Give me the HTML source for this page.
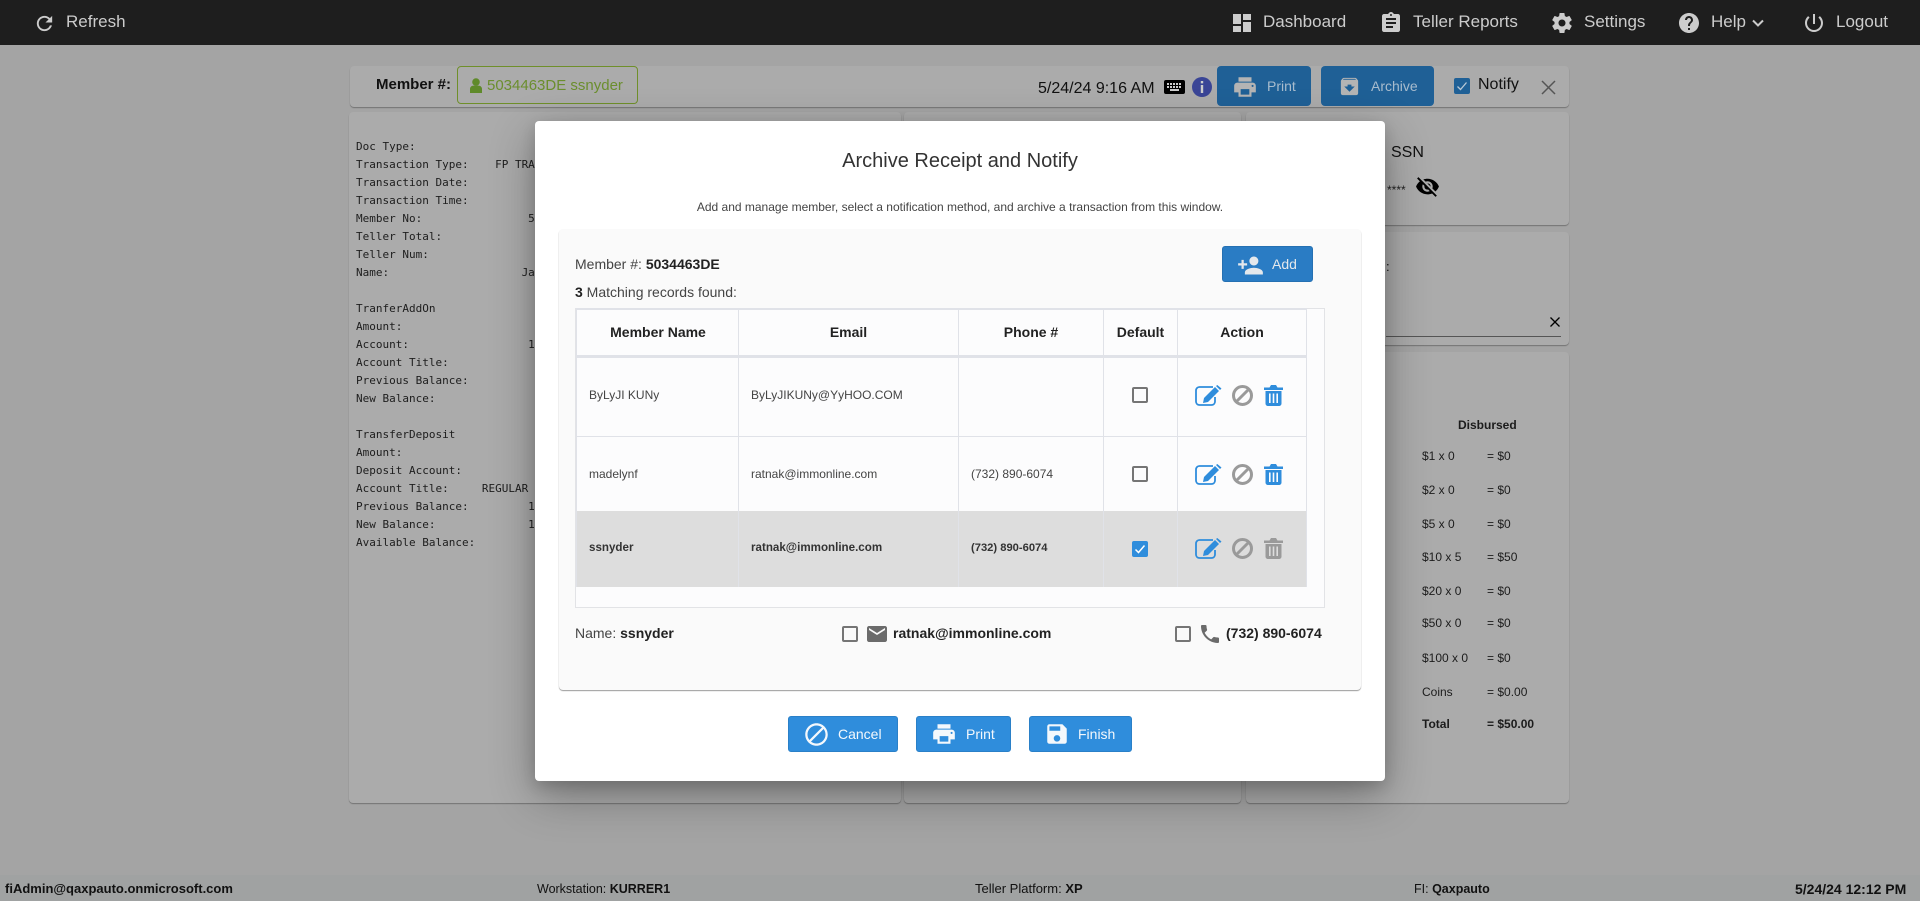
<!DOCTYPE html>
<html><head><meta charset="utf-8"><title>Archive Receipt and Notify</title>
<style>
*{box-sizing:border-box}
html,body{margin:0;padding:0;width:1920px;height:901px;overflow:hidden}
body{background:#a4a4a4;font-family:"Liberation Sans",Arial,sans-serif;position:relative;color:#222}
.a,.t,svg.i{position:absolute}
.t{white-space:nowrap;line-height:20px}
svg.i{display:block}
.panel{position:absolute;background:#ababab;border-radius:4px;box-shadow:0 1px 1px rgba(0,0,0,.3)}
pre{position:absolute;left:356px;top:138px;margin:0;font:11px/18px "DejaVu Sans Mono","Liberation Mono",monospace;color:#1d1d1d}
.b{font-weight:bold}
.btn{position:absolute;border-radius:3px;background:#2f8ddc;border:1px solid #2a80c8}
.w{color:#f4f8fc;font-size:14px}
.cb{position:absolute;width:16px;height:16px;border:2px solid #757575;border-radius:2px;background:transparent}
.line{position:absolute;background:#e0e2e8}
.c12{font-size:12px;color:#444}
.s12{font-size:12px;color:#1c1c1c}
.sb{font-size:13px;color:#111}
</style></head>
<body>
<!-- top bar -->
<div class="a" style="left:0;top:0;width:1920px;height:45px;background:#1e1e1e"></div>
<svg class="i" style="left:33px;top:12px" width="23" height="23" viewBox="0 0 24 24" fill="#ccc"><path d="M17.65 6.35C16.2 4.9 14.21 4 12 4c-4.42 0-7.99 3.58-7.99 8s3.57 8 7.99 8c3.73 0 6.84-2.55 7.73-6h-2.08c-.82 2.33-3.04 4-5.65 4-3.31 0-6-2.69-6-6s2.69-6 6-6c1.66 0 3.14.69 4.22 1.78L13 11h7V4l-2.35 2.35z"/></svg>
<div class="t" style="left:66px;top:12px;font-size:17px;color:#ccc">Refresh</div>
<svg class="i" style="left:1230px;top:11px" width="24" height="24" viewBox="0 0 24 24" fill="#ccc"><path d="M3 13h8V3H3v10zm0 8h8v-6H3v6zm10 0h8V11h-8v10zm0-18v6h8V3h-8z"/></svg>
<div class="t" style="left:1263px;top:12px;font-size:17px;color:#ccc">Dashboard</div>
<svg class="i" style="left:1379px;top:11px" width="24" height="24" viewBox="0 0 24 24" fill="#ccc"><path d="M19 3h-4.18C14.4 1.84 13.3 1 12 1c-1.3 0-2.4.84-2.82 2H5c-1.1 0-2 .9-2 2v14c0 1.1.9 2 2 2h14c1.1 0 2-.9 2-2V5c0-1.1-.9-2-2-2zm-7 0c.55 0 1 .45 1 1s-.45 1-1 1-1-.45-1-1 .45-1 1-1zm2 14H7v-2h7v2zm3-4H7v-2h10v2zm0-4H7V7h10v2z"/></svg>
<div class="t" style="left:1413px;top:12px;font-size:17px;color:#ccc">Teller Reports</div>
<svg class="i" style="left:1550px;top:11px" width="24" height="24" viewBox="0 0 24 24" fill="#ccc"><path d="M19.43 12.98c.04-.32.07-.64.07-.98s-.03-.66-.07-.98l2.11-1.65c.19-.15.24-.42.12-.64l-2-3.46c-.12-.22-.39-.3-.61-.22l-2.49 1c-.52-.4-1.08-.73-1.69-.98l-.38-2.65C14.46 2.18 14.25 2 14 2h-4c-.25 0-.46.18-.49.42l-.38 2.65c-.61.25-1.17.59-1.69.98l-2.49-1c-.23-.09-.49 0-.61.22l-2 3.46c-.13.22-.07.49.12.64l2.11 1.65c-.04.32-.07.65-.07.98s.03.66.07.98l-2.11 1.65c-.19.15-.24.42-.12.64l2 3.46c.12.22.39.3.61.22l2.49-1c.52.4 1.08.73 1.69.98l.38 2.65c.03.24.24.42.49.42h4c.25 0 .46-.18.49-.42l.38-2.65c.61-.25 1.17-.59 1.69-.98l2.49 1c.23.09.49 0 .61-.22l2-3.46c.12-.22.07-.49-.12-.64l-2.11-1.65zM12 15.5c-1.93 0-3.5-1.57-3.5-3.5s1.57-3.5 3.5-3.5 3.5 1.57 3.5 3.5-1.57 3.5-3.5 3.5z"/></svg>
<div class="t" style="left:1584px;top:12px;font-size:17px;color:#ccc">Settings</div>
<svg class="i" style="left:1677px;top:11px" width="24" height="24" viewBox="0 0 24 24" fill="#ccc"><path d="M12 2C6.48 2 2 6.48 2 12s4.48 10 10 10 10-4.48 10-10S17.52 2 12 2zm1 17h-2v-2h2v2zm2.07-7.75l-.9.92C13.45 12.9 13 13.5 13 15h-2v-.5c0-1.1.45-2.1 1.17-2.83l1.24-1.26c.37-.36.59-.86.59-1.41 0-1.1-.9-2-2-2s-2 .9-2 2H8c0-2.21 1.79-4 4-4s4 1.79 4 4c0 .88-.36 1.68-.93 2.25z"/></svg>
<div class="t" style="left:1711px;top:12px;font-size:17px;color:#ccc">Help</div>
<svg class="i" style="left:1751px;top:18px" width="14" height="10" viewBox="0 0 14 10" fill="none" stroke="#ccc" stroke-width="2"><path d="M2 2.5l5 5 5-5"/></svg>
<svg class="i" style="left:1802px;top:11px" width="24" height="24" viewBox="0 0 24 24" fill="#ccc"><path d="M13 3h-2v10h2V3zm4.83 2.17l-1.42 1.42C17.99 7.86 19 9.81 19 12c0 3.87-3.13 7-7 7s-7-3.13-7-7c0-2.19 1.01-4.14 2.58-5.42L6.17 5.17C4.23 6.82 3 9.26 3 12c0 4.97 4.03 9 9 9s9-4.03 9-9c0-2.74-1.23-5.18-3.17-6.83z"/></svg>
<div class="t" style="left:1836px;top:12px;font-size:17px;color:#ccc">Logout</div>

<!-- member bar -->
<div class="panel" style="left:350px;top:66px;width:1219px;height:41px"></div>
<div class="t b" style="left:376px;top:75px;font-size:15px;color:#111">Member #:</div>
<div class="a" style="left:457px;top:66px;width:181px;height:38px;border:1px solid #6f8f2a;border-radius:4px"></div>
<svg class="i" style="left:470px;top:78px" width="12" height="15" viewBox="0 0 12 15" fill="#5f8a2a"><circle cx="6" cy="4" r="3.8"/><path d="M0 15v-4c0-2 1.6-3.4 3.4-3.4h5.2C10.4 7.600 12 9 12 11v4z"/></svg>
<div class="t" style="left:487px;top:76px;font-size:15px;color:#6b8e2e">5034463DE ssnyder</div>
<div class="t" style="left:1038px;top:79px;font-size:16px;color:#111">5/24/24 9:16 AM</div>
<div class="a" style="left:1164px;top:80px;width:21px;height:14px;background:#000;border-radius:2px"></div>
<svg class="i" style="left:1166px;top:82px" width="17" height="10" viewBox="0 0 17 10" fill="#ccc"><path d="M1 1h2v2H1zM4 1h2v2H4zM7 1h2v2H7zM10 1h2v2h-2zM13 1h2v2h-2zM1 4h2v2H1zM4 4h2v2H4zM7 4h2v2H7zM10 4h2v2h-2zM13 4h2v2h-2zM4 7h9v2H4z"/></svg>
<svg class="i" style="left:1192px;top:77px" width="20" height="20" viewBox="0 0 20 20"><circle cx="10" cy="10" r="10" fill="#3a4596"/><path d="M8.800 4h2.400v2.400H8.800zM8.800 8h2.400v8H8.800z" fill="#ccc"/></svg>
<div class="a" style="left:1217px;top:66px;width:94px;height:40px;background:#1f6096;border-radius:4px"></div>
<svg class="i" style="left:1232px;top:74px" width="26" height="26" viewBox="0 0 24 24" fill="#b4b4b4"><path d="M19 8H5c-1.660 0-3 1.340-3 3v6h4v4h12v-4h4v-6c0-1.660-1.340-3-3-3zm-3 11H8v-5h8v5zm3-7c-.55 0-1-.45-1-1s.45-1 1-1 1 .45 1 1-.45 1-1 1zm-1-9H6v4h12V3z"/></svg>
<div class="t" style="left:1267px;top:76px;font-size:14px;color:#a8bccd">Print</div>
<div class="a" style="left:1321px;top:66px;width:113px;height:40px;background:#1f6096;border-radius:4px"></div>
<svg class="i" style="left:1338px;top:75px" width="23" height="23" viewBox="0 0 24 24" fill="#b4b4b4"><path d="M20.540 5.230l-1.390-1.680C18.880 3.210 18.470 3 18 3H6c-.47 0-.88.21-1.160.55L3.460 5.230C3.170 5.570 3 6.020 3 6.500V19c0 1.100.9 2 2 2h14c1.100 0 2-.9 2-2V6.500c0-.48-.17-.93-.46-1.270zM12 17.500L6.500 12H10v-2h4v2h3.500L12 17.500zM5.120 5l.81-1h12l.94 1H5.120z"/></svg>
<div class="t" style="left:1371px;top:76px;font-size:14px;color:#a8bccd">Archive</div>
<div class="a" style="left:1454px;top:78px;width:16px;height:16px;background:#1f6096;border-radius:2px"></div>
<svg class="i" style="left:1454px;top:78px" width="16" height="16" viewBox="0 0 16 16" fill="none" stroke="#b8c8d6" stroke-width="1.300"><path d="M3.500 8.500l3 3 6-7"/></svg>
<div class="t" style="left:1478px;top:75px;font-size:16px;color:#111">Notify</div>
<svg class="i" style="left:1541px;top:80px" width="15" height="15" viewBox="0 0 15 15" fill="none" stroke="#555" stroke-width="1.500"><path d="M1 1l13 13M14 1L1 14"/></svg>

<!-- background panels -->
<div class="panel" style="left:349px;top:112px;width:552px;height:691px"></div>
<div class="panel" style="left:904px;top:112px;width:337px;height:691px"></div>
<div class="panel" style="left:1246px;top:112px;width:323px;height:113px"></div>
<div class="panel" style="left:1246px;top:232px;width:323px;height:113px"></div>
<div class="panel" style="left:1246px;top:352px;width:323px;height:451px"></div>
<pre>Doc Type:
Transaction Type:    FP TRANSFER
Transaction Date:
Transaction Time:
Member No:                5034463DE
Teller Total:
Teller Num:
Name:                    Jane

TranferAddOn
Amount:
Account:                  1234
Account Title:
Previous Balance:
New Balance:

TransferDeposit
Amount:
Deposit Account:
Account Title:     REGULAR SAVINGS
Previous Balance:         1000
New Balance:              1000
Available Balance:</pre>
<div class="t" style="left:1391px;top:143px;font-size:16px;color:#111">SSN</div>
<div class="t" style="left:1387px;top:180px;font-size:12px;color:#222">****</div>
<svg class="i" style="left:1415px;top:174px" width="25" height="25" viewBox="0 0 24 24" fill="#000"><path d="M12 7c2.760 0 5 2.240 5 5 0 .65-.13 1.260-.36 1.830l2.920 2.920c1.510-1.260 2.700-2.890 3.430-4.750-1.730-4.390-6-7.500-11-7.500-1.400 0-2.740.25-3.980.7l2.160 2.160C10.740 7.130 11.350 7 12 7zM2 4.270l2.280 2.280.46.46C3.080 8.300 1.780 10.020 1 12c1.730 4.390 6 7.500 11 7.500 1.550 0 3.030-.3 4.380-.84l.42.42L19.730 22 21 20.730 3.270 3 2 4.270zM7.530 9.800l1.550 1.550c-.05.21-.08.43-.08.65 0 1.660 1.340 3 3 3 .22 0 .44-.03.65-.08l1.550 1.550c-.67.33-1.410.53-2.200.53-2.760 0-5-2.240-5-5 0-.79.2-1.530.53-2.200zm4.310-.78l3.150 3.150.02-.16c0-1.660-1.340-3-3-3l-.17.01z"/></svg>
<div class="t" style="left:1386px;top:257px;font-size:13px;color:#111">:</div>
<svg class="i" style="left:1550px;top:317px" width="10" height="10" viewBox="0 0 10 10" fill="none" stroke="#000" stroke-width="1.300"><path d="M.5.5l9 9M9.500.5l-9 9"/></svg>
<div class="a" style="left:1386px;top:336px;width:175px;height:1px;background:#555"></div>
<div class="t b s12" style="left:1458px;top:415px">Disbursed</div>
<div class="t s12" style="left:1422px;top:446px">$1 x 0</div><div class="t s12" style="left:1487px;top:446px">= $0</div>
<div class="t s12" style="left:1422px;top:480px">$2 x 0</div><div class="t s12" style="left:1487px;top:480px">= $0</div>
<div class="t s12" style="left:1422px;top:514px">$5 x 0</div><div class="t s12" style="left:1487px;top:514px">= $0</div>
<div class="t s12" style="left:1422px;top:547px">$10 x 5</div><div class="t s12" style="left:1487px;top:547px">= $50</div>
<div class="t s12" style="left:1422px;top:581px">$20 x 0</div><div class="t s12" style="left:1487px;top:581px">= $0</div>
<div class="t s12" style="left:1422px;top:613px">$50 x 0</div><div class="t s12" style="left:1487px;top:613px">= $0</div>
<div class="t s12" style="left:1422px;top:648px">$100 x 0</div><div class="t s12" style="left:1487px;top:648px">= $0</div>
<div class="t s12" style="left:1422px;top:682px">Coins</div><div class="t s12" style="left:1487px;top:682px">= $0.00</div>
<div class="t s12 b" style="left:1422px;top:714px">Total</div><div class="t s12 b" style="left:1487px;top:714px">= $50.00</div>

<!-- status bar -->
<div class="a" style="left:0;top:875px;width:1920px;height:26px;background:#a0a2a2"></div>
<div class="t sb b" style="left:5px;top:879px">fiAdmin@qaxpauto.onmicrosoft.com</div>
<div class="t sb" style="left:537px;top:879px;font-size:12.500px">Workstation: <b>KURRER1</b></div>
<div class="t sb" style="left:975px;top:879px">Teller Platform: <b>XP</b></div>
<div class="t sb" style="left:1414px;top:879px;font-size:12.500px">FI: <b>Qaxpauto</b></div>
<div class="t sb b" style="left:1795px;top:879px;font-size:14px">5/24/24 12:12 PM</div>

<!-- modal -->
<div class="a" style="left:535px;top:121px;width:850px;height:660px;background:#fff;border-radius:4px;box-shadow:0 15px 45px rgba(0,0,0,.32),0 5px 15px rgba(0,0,0,.15)"></div>
<div class="t" style="left:535px;width:850px;text-align:center;top:151px;font-size:20px;color:#333">Archive Receipt and Notify</div>
<div class="t" style="left:535px;width:850px;text-align:center;top:197px;font-size:12px;color:#444">Add and manage member, select a notification method, and archive a transaction from this window.</div>
<div class="a" style="left:559px;top:229px;width:802px;height:461px;background:#fafafa;border-radius:4px;box-shadow:0 1px 1px rgba(0,0,0,.4)"></div>
<div class="t" style="left:575px;top:254px;font-size:14px;color:#444">Member #: <b style="color:#222">5034463DE</b></div>
<div class="t" style="left:575px;top:282px;font-size:14px;color:#444"><b style="color:#222">3</b> Matching records found:</div>
<div class="a" style="left:1222px;top:246px;width:91px;height:36px;background:#2a7cc4;border:1px solid #2570b2;border-radius:3px"></div>
<svg class="i" style="left:1237px;top:252px" width="27" height="27" viewBox="0 0 24 24" fill="#e4e8ec"><path d="M15 12c2.210 0 4-1.790 4-4s-1.790-4-4-4-4 1.790-4 4 1.790 4 4 4zm-9-2V7H4v3H1v2h3v3h2v-3h3v-2H6zm9 4c-2.670 0-8 1.340-8 4v2h16v-2c0-2.660-5.330-4-8-4z"/></svg>
<div class="t" style="left:1272px;top:254px;font-size:14px;color:#e4e8ec">Add</div>

<!-- table -->
<div class="a" style="left:575px;top:308px;width:750px;height:300px;border:1px solid #e2e3e6;background:#fcfcfd"></div>
<div class="a" style="left:576px;top:511px;width:731px;height:76px;background:#dddddd"></div>
<div class="line" style="left:576px;top:308px;width:731px;height:2px"></div>
<div class="line" style="left:576px;top:355px;width:731px;height:3px"></div>
<div class="line" style="left:576px;top:436px;width:731px;height:1px"></div>
<div class="line" style="left:576px;top:309px;width:1px;height:278px"></div>
<div class="line" style="left:738px;top:309px;width:1px;height:278px"></div>
<div class="line" style="left:958px;top:309px;width:1px;height:278px"></div>
<div class="line" style="left:1103px;top:309px;width:1px;height:278px"></div>
<div class="line" style="left:1177px;top:309px;width:1px;height:278px"></div>
<div class="line" style="left:1306px;top:309px;width:1px;height:278px"></div>
<div class="t b" style="left:578px;width:160px;text-align:center;top:322px;font-size:14px;color:#222">Member Name</div>
<div class="t b" style="left:739px;width:219px;text-align:center;top:322px;font-size:14px;color:#222">Email</div>
<div class="t b" style="left:959px;width:144px;text-align:center;top:322px;font-size:14px;color:#222">Phone #</div>
<div class="t b" style="left:1104px;width:73px;text-align:center;top:322px;font-size:14px;color:#222">Default</div>
<div class="t b" style="left:1178px;width:128px;text-align:center;top:322px;font-size:14px;color:#222">Action</div>
<div class="t c12" style="left:589px;top:385px">ByLyJI KUNy</div>
<div class="t c12" style="left:751px;top:385px">ByLyJIKUNy@YyHOO.COM</div>
<div class="t c12" style="left:589px;top:464px">madelynf</div>
<div class="t c12" style="left:751px;top:464px">ratnak@immonline.com</div>
<div class="t c12" style="left:971px;top:464px">(732) 890-6074</div>
<div class="t c12 b" style="left:589px;top:538px;font-size:11.600px;color:#333">ssnyder</div>
<div class="t c12 b" style="left:751px;top:538px;font-size:11.600px;color:#333">ratnak@immonline.com</div>
<div class="t c12 b" style="left:971px;top:538px;font-size:11.200px;color:#333">(732) 890-6074</div>
<div class="cb" style="left:1132px;top:387px"></div>
<div class="cb" style="left:1132px;top:466px"></div>
<div class="a" style="left:1132px;top:541px;width:16px;height:16px;background:#2f8ddc;border-radius:2px"></div>
<svg class="i" style="left:1132px;top:541px" width="16" height="16" viewBox="0 0 16 16" fill="none" stroke="#fff" stroke-width="1.500"><path d="M3.500 8.500l3 3 6-7"/></svg>

<!-- row 1 action icons -->
<svg class="i" style="left:1195px;top:385px" width="27" height="22" viewBox="0 0 27 22"><path d="M18 2H4.500C2.500 2 1 3.500 1 5.500v11C1 18.500 2.500 20 4.500 20h12c2 0 3.500-1.500 3.500-3.500V12" fill="none" stroke="#2f8ddc" stroke-width="1.800"/><path d="M9 13l11-11 4 4-11 11-5 1zM21 1l1.300-1 4.200 3.500-1.500 1.500z" fill="#2f8ddc"/></svg>
<svg class="i" style="left:1232px;top:385px" width="21" height="21" viewBox="0 0 21 21" fill="none" stroke="#9a9a9a" stroke-width="3"><circle cx="10.500" cy="10.500" r="9"/><path d="M4.500 16.500l12-12"/></svg>
<svg class="i" style="left:1264px;top:385px" width="19" height="21" viewBox="0 0 19 21"><path d="M7 0h5l1.500 2.500H19V5H0V2.500h5.500zM1.500 6h16v12.500c0 1.400-1 2.500-2.500 2.500H4c-1.500 0-2.500-1.100-2.500-2.500z M5 8.500V18h1.600V8.500zM8.700 8.500V18h1.600V8.500zM12.400 8.500V18H14V8.500z" fill="#2f8ddc" fill-rule="evenodd"/></svg>
<!-- row 2 action icons -->
<svg class="i" style="left:1195px;top:464px" width="27" height="22" viewBox="0 0 27 22"><path d="M18 2H4.500C2.500 2 1 3.500 1 5.500v11C1 18.500 2.500 20 4.500 20h12c2 0 3.500-1.500 3.500-3.500V12" fill="none" stroke="#2f8ddc" stroke-width="1.800"/><path d="M9 13l11-11 4 4-11 11-5 1zM21 1l1.300-1 4.200 3.500-1.500 1.500z" fill="#2f8ddc"/></svg>
<svg class="i" style="left:1232px;top:464px" width="21" height="21" viewBox="0 0 21 21" fill="none" stroke="#9a9a9a" stroke-width="3"><circle cx="10.500" cy="10.500" r="9"/><path d="M4.500 16.500l12-12"/></svg>
<svg class="i" style="left:1264px;top:464px" width="19" height="21" viewBox="0 0 19 21"><path d="M7 0h5l1.500 2.500H19V5H0V2.500h5.500zM1.500 6h16v12.500c0 1.400-1 2.500-2.500 2.500H4c-1.500 0-2.500-1.100-2.500-2.500z M5 8.500V18h1.600V8.500zM8.700 8.500V18h1.600V8.500zM12.400 8.500V18H14V8.500z" fill="#2f8ddc" fill-rule="evenodd"/></svg>
<!-- row 3 action icons -->
<svg class="i" style="left:1195px;top:538px" width="27" height="22" viewBox="0 0 27 22"><path d="M18 2H4.500C2.500 2 1 3.500 1 5.500v11C1 18.500 2.500 20 4.500 20h12c2 0 3.500-1.500 3.500-3.500V12" fill="none" stroke="#2f8ddc" stroke-width="1.800"/><path d="M9 13l11-11 4 4-11 11-5 1zM21 1l1.300-1 4.200 3.500-1.500 1.500z" fill="#2f8ddc"/></svg>
<svg class="i" style="left:1232px;top:538px" width="21" height="21" viewBox="0 0 21 21" fill="none" stroke="#9a9a9a" stroke-width="3"><circle cx="10.500" cy="10.500" r="9"/><path d="M4.500 16.500l12-12"/></svg>
<svg class="i" style="left:1264px;top:538px" width="19" height="21" viewBox="0 0 19 21"><path d="M7 0h5l1.500 2.500H19V5H0V2.500h5.500zM1.500 6h16v12.500c0 1.400-1 2.500-2.500 2.500H4c-1.500 0-2.500-1.100-2.500-2.500z M5 8.500V18h1.600V8.500zM8.700 8.500V18h1.600V8.500zM12.400 8.500V18H14V8.500z" fill="#9a9a9a" fill-rule="evenodd"/></svg>

<!-- notification row -->
<div class="t" style="left:575px;top:623px;font-size:14px;color:#444">Name: <b style="color:#222">ssnyder</b></div>
<div class="cb" style="left:842px;top:626px"></div>
<svg class="i" style="left:865px;top:622px" width="24" height="24" viewBox="0 0 24 24" fill="#6b6b6b"><path d="M20 4H4c-1.100 0-1.990.9-1.990 2L2 18c0 1.100.9 2 2 2h16c1.100 0 2-.9 2-2V6c0-1.100-.9-2-2-2zm0 4l-8 5-8-5V6l8 5 8-5v2z"/></svg>
<div class="t b" style="left:893px;top:623px;font-size:14px;color:#222">ratnak@immonline.com</div>
<div class="cb" style="left:1175px;top:626px"></div>
<svg class="i" style="left:1198px;top:622px" width="24" height="24" viewBox="0 0 24 24" fill="#6b6b6b"><path d="M6.620 10.790c1.440 2.830 3.760 5.140 6.590 6.590l2.200-2.200c.27-.27.67-.36 1.020-.24 1.120.37 2.330.57 3.570.57.55 0 1 .45 1 1V20c0 .55-.45 1-1 1-9.390 0-17-7.610-17-17 0-.55.45-1 1-1h3.500c.55 0 1 .45 1 1 0 1.250.2 2.450.57 3.570.11.35.03.74-.25 1.020l-2.200 2.200z"/></svg>
<div class="t b" style="left:1226px;top:623px;font-size:14px;color:#222">(732) 890-6074</div>

<!-- footer buttons -->
<div class="btn" style="left:788px;top:716px;width:110px;height:36px"></div>
<svg class="i" style="left:803px;top:721px" width="27" height="27" viewBox="0 0 24 24" fill="#f4f8fc"><path d="M12 2C6.480 2 2 6.480 2 12s4.480 10 10 10 10-4.480 10-10S17.520 2 12 2zM4 12c0-4.420 3.580-8 8-8 1.850 0 3.550.63 4.900 1.690L5.690 16.900C4.630 15.550 4 13.850 4 12zm8 8c-1.850 0-3.550-.63-4.900-1.690L18.310 7.100C19.370 8.450 20 10.150 20 12c0 4.420-3.580 8-8 8z"/></svg>
<div class="t w" style="left:838px;top:724px">Cancel</div>
<div class="btn" style="left:916px;top:716px;width:95px;height:36px"></div>
<svg class="i" style="left:931px;top:721px" width="26" height="26" viewBox="0 0 24 24" fill="#f4f8fc"><path d="M19 8H5c-1.660 0-3 1.340-3 3v6h4v4h12v-4h4v-6c0-1.660-1.340-3-3-3zm-3 11H8v-5h8v5zm3-7c-.55 0-1-.45-1-1s.45-1 1-1 1 .45 1 1-.45 1-1 1zm-1-9H6v4h12V3z"/></svg>
<div class="t w" style="left:966px;top:724px">Print</div>
<div class="btn" style="left:1029px;top:716px;width:103px;height:36px"></div>
<svg class="i" style="left:1044px;top:721px" width="26" height="26" viewBox="0 0 24 24" fill="#f4f8fc"><path d="M17 3H5c-1.110 0-2 .9-2 2v14c0 1.100.89 2 2 2h14c1.100 0 2-.9 2-2V7l-4-4zm-5 16c-1.660 0-3-1.340-3-3s1.340-3 3-3 3 1.340 3 3-1.340 3-3 3zm3-10H5V5h10v4z"/></svg>
<div class="t w" style="left:1078px;top:724px">Finish</div>
</body></html>
